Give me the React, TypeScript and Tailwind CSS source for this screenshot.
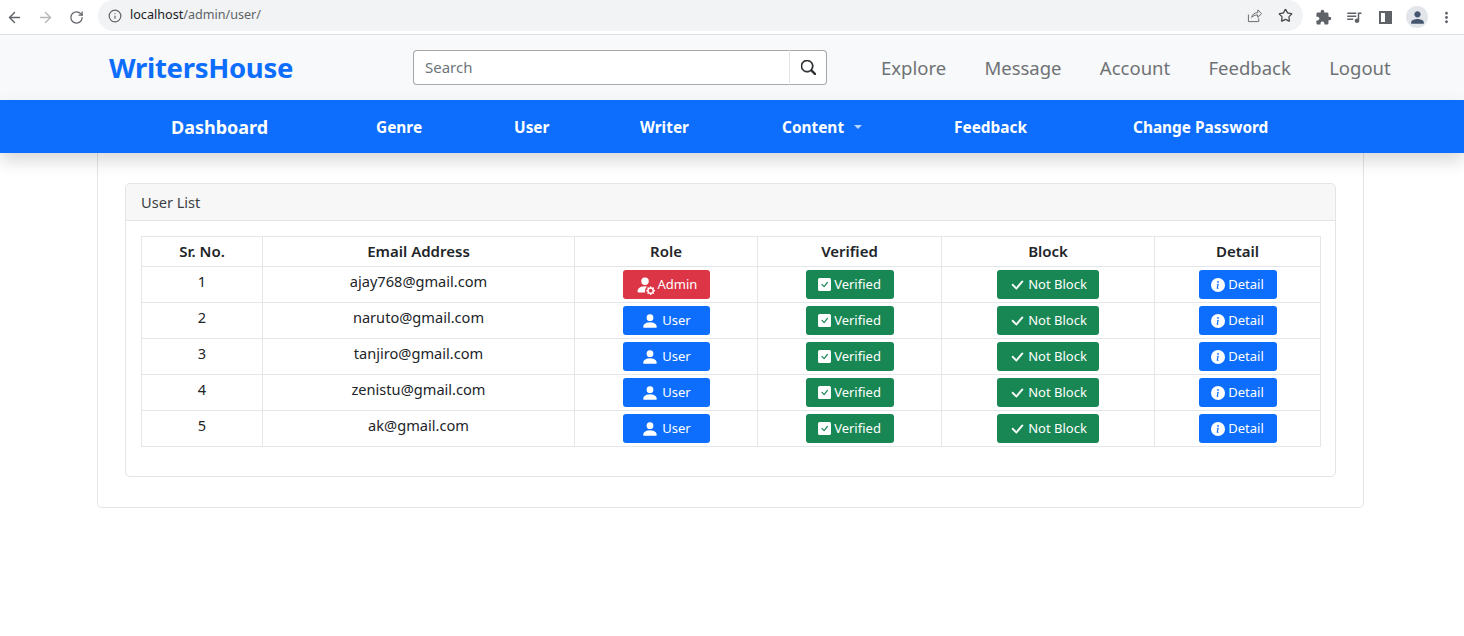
import React from 'react';
import { ArrowLeft, ArrowRight, RotateCw, Info, Star } from 'lucide-react';
import { BsCheckLg, BsCheckSquareFill, BsInfoCircleFill, BsPersonFill, BsPersonFillGear, BsSearch } from 'react-icons/bs';
import { MdExtension, MdMoreVert, MdPerson, MdQueueMusic } from 'react-icons/md';

const users = [
  { id: 1, email: 'ajay768@gmail.com', admin: true },
  { id: 2, email: 'naruto@gmail.com', admin: false },
  { id: 3, email: 'tanjiro@gmail.com', admin: false },
  { id: 4, email: 'zenistu@gmail.com', admin: false },
  { id: 5, email: 'ak@gmail.com', admin: false },
];

const topLinks = ['Explore', 'Message', 'Account', 'Feedback', 'Logout'];

const BrowserBar = () => (
  <div className="h-[35px] flex items-center bg-white border-b border-[#dfe1e5] text-[#5f6368]">
    <ArrowLeft size={17} strokeWidth={2} className="ml-[6px]" />
    <ArrowRight size={17} strokeWidth={2} className="ml-[14px] text-[#b4b6b9]" />
    <RotateCw size={15} strokeWidth={2} className="ml-[15px]" />
    <div className="ml-[14px] w-[1205px] h-[31px] rounded-full bg-[#f1f3f4] flex items-center pl-[10px] pr-[10px] -mt-[3px]">
      <Info size={14} strokeWidth={2} />
      <span className="ml-[8px] text-[12.6px] text-[#202124]">localhost<span className="text-[#5f6368]">/admin/user/</span></span>
      <svg viewBox="0 0 16 16" className="ml-auto w-[15px] h-[15px]" fill="none" stroke="currentColor" strokeWidth="1">
        <path d="M1.5 7v7.5h11V11M5 10c.5-3 3-5 6.5-5V2l4 4-4 4V7.500c-3 0-5 .8-6.500 2.500z" />
      </svg>
      <Star size={15} strokeWidth={2} className="ml-[16px] text-[#44474a]" />
    </div>
    <MdExtension size={17} className="ml-[12px]" />
    <MdQueueMusic size={18} className="ml-[13px]" />
    <div className="ml-[16px] w-[13px] h-[13px] border-2 border-[#5f6368] flex justify-end">
      <div className="w-[5px] bg-[#5f6368]" />
    </div>
    <div className="ml-[14px] w-[22px] h-[22px] rounded-full bg-[#e2e5ea] flex items-center justify-center">
      <MdPerson size={19} className="text-[#47566f]" />
    </div>
    <MdMoreVert size={17} className="ml-[10px]" />
  </div>
);

const TopNav = () => (
  <nav className="h-[65px] bg-[#f8f9fa] flex items-center pl-[109px]">
    <a className="w-[304px] text-[27.5px] leading-none font-bold text-[#0d6efd] tracking-[-0.3px]">WritersHouse</a>
    <div className="w-[414px] h-[35px] flex -mt-[1px]">
      <div className="flex-1 border border-[#a5a7a9] border-r-0 rounded-l-[4px] bg-white pl-[11px] flex items-center text-[15px] text-[#6c757d]">Search</div>
      <div className="w-[38px] border border-[#a5a7a9] border-l-[#e2e3e4] rounded-r-[4px] bg-white flex items-center justify-center text-[#212529]">
        <BsSearch size={15} strokeWidth={0.7} />
      </div>
    </div>
    <ul className="flex ml-[54px] gap-[38.3px] text-[18.5px] text-[#6f7275]">
      {topLinks.map((link) => (
        <li key={link}>{link}</li>
      ))}
    </ul>
  </nav>
);

const SubNav = () => (
  <div className="relative z-10 h-[53px] bg-[#0d6efd] flex items-center pl-[171px] pt-[2px] text-white font-bold text-[15.4px] shadow-[0_8px_16px_rgba(0,0,0,0.15)]">
    <span className="w-[205px] text-[18px] -mt-[1px]">Dashboard</span>
    <span className="w-[138px]">Genre</span>
    <span className="w-[126px]">User</span>
    <span className="w-[142px]">Writer</span>
    <span className="w-[172px] flex items-center">
      Content
      <span className="ml-[10px] w-0 h-0 border-x-[4.500px] border-x-transparent border-t-[4.500px] border-t-white/70" />
    </span>
    <span className="w-[179px]">Feedback</span>
    <span>Change Password</span>
  </div>
);

const Btn = ({ color, children }: { color: string; children: React.ReactNode }) => (
  <div className={`mx-auto h-[29px] rounded-[3px] flex items-center justify-center gap-[3px] text-[13px] text-white ${color}`}>
    {children}
  </div>
);

const UserTable = () => (
  <table className="w-[1179px] table-fixed border-collapse text-[14.6px] text-[#212529]">
    <colgroup>
      <col className="w-[121px]" />
      <col className="w-[312px]" />
      <col className="w-[183px]" />
      <col className="w-[184px]" />
      <col className="w-[213px]" />
      <col className="w-[166px]" />
    </colgroup>
    <thead>
      <tr className="h-[30px]">
        {['Sr. No.', 'Email Address', 'Role', 'Verified', 'Block', 'Detail'].map((h) => (
          <th key={h} className="border border-[#e4e7ea] text-[15px] font-semibold align-middle">{h}</th>
        ))}
      </tr>
    </thead>
    <tbody>
      {users.map((u) => (
        <tr key={u.id} className="h-[36px] text-center">
          <td className="border border-[#e4e7ea] align-top pt-[4px]">{u.id}</td>
          <td className="border border-[#e4e7ea] align-top pt-[4px]">{u.email}</td>
          <td className="border border-[#e4e7ea]">
            {u.admin ? (
              <Btn color="w-[87px] bg-[#dc3545]"><BsPersonFillGear size={20} />Admin</Btn>
            ) : (
              <Btn color="w-[87px] bg-[#0d6efd]"><BsPersonFill size={18} />User</Btn>
            )}
          </td>
          <td className="border border-[#e4e7ea]">
            <Btn color="w-[88px] bg-[#198754]"><BsCheckSquareFill size={13} />Verified</Btn>
          </td>
          <td className="border border-[#e4e7ea]">
            <Btn color="w-[102px] bg-[#198754]"><BsCheckLg size={16} strokeWidth={0.6} />Not Block</Btn>
          </td>
          <td className="border border-[#e4e7ea]">
            <Btn color="w-[78px] bg-[#0d6efd]"><BsInfoCircleFill size={14} />Detail</Btn>
          </td>
        </tr>
      ))}
    </tbody>
  </table>
);

export default function App() {
  return (
    <div className="min-h-[636px] bg-white font-['Noto_Sans',sans-serif] overflow-hidden">
      <BrowserBar />
      <TopNav />
      <SubNav />
      <div className="mx-[97px] w-[1267px] h-[355px] border border-t-0 border-[#e2e5e8] rounded-b-[5px] px-[27px] pt-[30px]">
        <div className="h-[294px] border border-[#e2e5e8] rounded-[5px]">
          <div className="h-[37px] bg-[#f7f7f7] border-b border-[#e2e5e8] rounded-t-[5px] pl-[15px] pt-[1px] flex items-center text-[14.6px] text-[#3a3f44]">
            User List
          </div>
          <div className="pl-[15px] pt-[15px]">
            <UserTable />
          </div>
        </div>
      </div>
    </div>
  );
}
